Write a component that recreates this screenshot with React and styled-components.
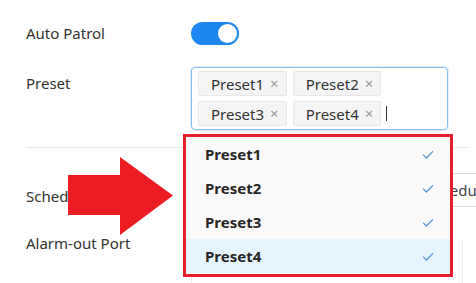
import React from 'react';
import styled, { createGlobalStyle } from 'styled-components';

const Global = createGlobalStyle`
  html, body { margin: 0; padding: 0; background: #fff; }
  body { font-family: "Noto Sans", "Open Sans", sans-serif; }
`;

const Page = styled.div`
  position: relative;
  width: 476px;
  height: 283px;
  overflow: hidden;
  padding: 21px 0 0 26px;
  box-sizing: border-box;
`;

const Row = styled.div`
  display: grid;
  grid-template-columns: 165px 1fr;
  margin-top: ${(p) => p.$mt || 0}px;
`;

const Label = styled.div`
  font-size: 15px;
  line-height: 25px;
  color: #333;
  white-space: nowrap;
  padding-top: ${(p) => p.$pt || 0}px;
`;

const Toggle = styled.div`
  position: relative;
  width: 48px;
  height: 23px;
  margin-top: 1px;
  border-radius: 12px;
  background: #1e86ef;
`;

const Knob = styled.div`
  position: absolute;
  right: 2px;
  top: 2px;
  width: 19px;
  height: 19px;
  border-radius: 50%;
  background: #fff;
`;

const SelectWrap = styled.div`
  position: relative;
  width: 257px;
`;

const SelectBox = styled.div`
  box-sizing: border-box;
  width: 257px;
  height: 63px;
  border: 1px solid #86bdef;
  border-radius: 4px;
  box-shadow: 0 0 0 1px rgba(134, 189, 239, 0.25);
  padding: 3px 6px;
  display: flex;
  flex-wrap: wrap;
  align-content: flex-start;
  align-items: center;
  gap: 5px 6px;
`;

const Tag = styled.div`
  box-sizing: border-box;
  height: 25px;
  display: flex;
  align-items: center;
  padding: 0 7px 0 12px;
  background: #f5f5f5;
  border: 1px solid #e8e8e8;
  border-radius: 2px;
  font-size: 15px;
  color: #333;
`;

const Close = styled.span`
  margin-left: 6px;
  color: #9a9a9a;
  font-size: 15px;
  line-height: 1;
`;

const Caret = styled.div`
  width: 1px;
  height: 15px;
  margin-left: -1px;
  background: #333;
`;

const Divider = styled.div`
  width: 442px;
  height: 1px;
  margin-top: 17px;
  background: #e8e8e8;
`;

const Input = styled.div`
  box-sizing: border-box;
  width: 300px;
  height: 34px;
  border: 1px solid #dcdcdc;
  border-radius: 3px;
  padding-left: 233px;
  font-size: 15px;
  line-height: 32px;
  color: #444;
  white-space: nowrap;
`;

const ListBox = styled.div`
  box-sizing: border-box;
  width: 272px;
  height: 60px;
  margin-top: 12px;
  border-left: 1px solid #ececec;
  border-right: 1px solid #ececec;
`;

const Menu = styled.div`
  position: absolute;
  z-index: 2;
  top: calc(100% + 4px);
  left: -8px;
  width: 270px;
  box-sizing: border-box;
  border: 3px solid #e3202b;
  background: #fafafa;
  padding-bottom: 1px;
`;

const Item = styled.div`
  height: 34px;
  display: flex;
  align-items: center;
  justify-content: space-between;
  padding: 0 16px 0 19px;
  font-size: 15px;
  font-weight: 700;
  color: #262626;
  background: ${(p) => (p.$active ? '#e6f4fd' : 'transparent')};
`;

const Arrow = styled.svg`
  position: absolute;
  left: 68px;
  top: 157px;
  z-index: 3;
`;

const Check = () => (
  <svg width="12" height="9" viewBox="0 0 12 9">
    <path d="M1 4.6 L4.4 8 L11 1.2" fill="none" stroke="#5b9ad8" strokeWidth="1.3" />
  </svg>
);

const presets = ['Preset1', 'Preset2', 'Preset3', 'Preset4'];

export default function App() {
  return (
    <>
      <Global />
      <Page>
        <Row>
          <Label>Auto Patrol</Label>
          <Toggle>
            <Knob />
          </Toggle>
        </Row>
        <Row $mt={21}>
          <Label $pt={4}>Preset</Label>
          <SelectWrap>
            <SelectBox>
              {presets.map((p) => (
                <Tag key={p}>
                  {p}
                  <Close>×</Close>
                </Tag>
              ))}
              <Caret />
            </SelectBox>
            <Menu>
              {presets.map((p, i) => (
                <Item key={p} $active={i === 3}>
                  {p}
                  <Check />
                </Item>
              ))}
            </Menu>
          </SelectWrap>
        </Row>
        <Divider />
        <Row $mt={25}>
          <Label $pt={11}>Schedule</Label>
          <Input>Schedule</Input>
        </Row>
        <Row $mt={18}>
          <Label $pt={4}>Alarm-out Port</Label>
          <ListBox />
        </Row>
        <Arrow width="106" height="79" viewBox="0 0 106 79">
          <polygon points="0,18 52,18 52,0 105,38.5 52,78 52,58 0,58" fill="#ec1c24" />
        </Arrow>
      </Page>
    </>
  );
}
